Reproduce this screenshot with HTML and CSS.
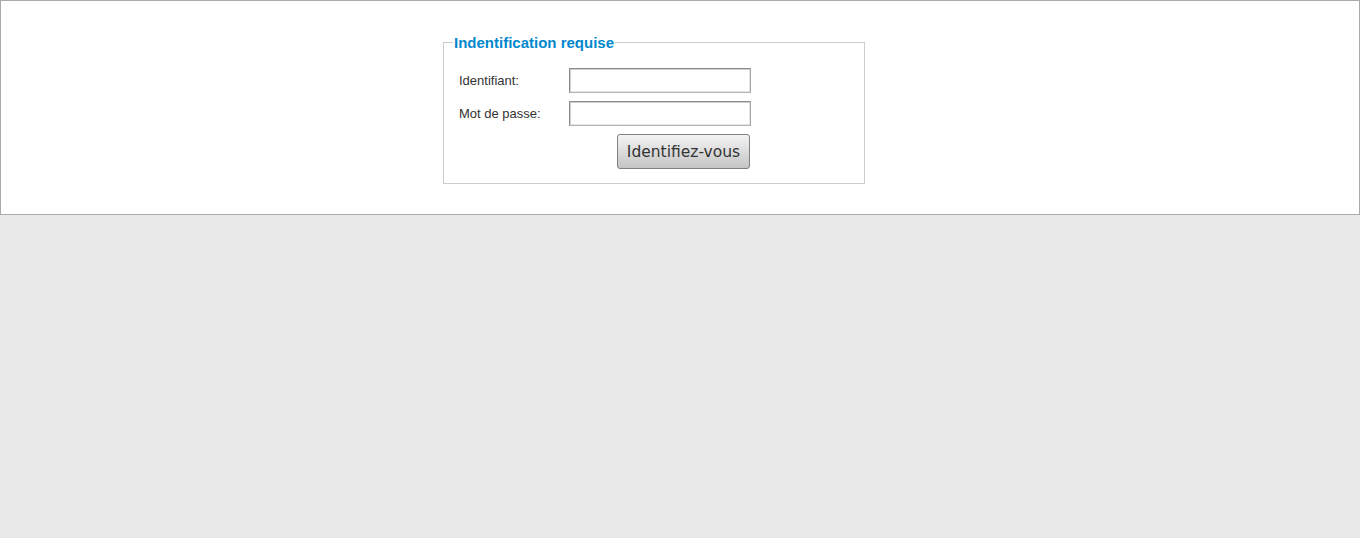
FILE: index.html
```html
<!DOCTYPE html>
<html>
  <head>
    <meta charset="utf-8">
    <title>Identification</title>
    <link rel="stylesheet" href="styles.css">
  </head>
  <body>
    <div class="panel">
      <form class="login">
        <fieldset>
          <legend>Indentification requise</legend>
          <div class="row">
            <label for="login">Identifiant:</label>
            <input id="login" type="text">
          </div>
          <div class="row">
            <label for="pass">Mot de passe:</label>
            <input id="pass" type="password">
          </div>
          <div class="actions">
            <button type="button">Identifiez-vous</button>
          </div>
        </fieldset>
      </form>
    </div>
  </body>
</html>
```

FILE: styles.css
```css
* {
  box-sizing: border-box;
}

html,
body {
  margin: 0;
  height: 100%;
}

body {
  background-color: #e8e8e8;
  font-family: "Liberation Sans", Arial, sans-serif;
  color: #333;
}

.panel {
  background-color: white;
  border: 1px solid #aaa;
  height: 215px;
  padding-top: 33px;
}

.login fieldset {
  width: 422px;
  margin: 0 0 0 442px;
  padding: 17px 0 14px 15px;
  border: 1px solid #ccc;
}

.login legend {
  padding: 0 1px;
  margin-left: -6px;
  color: #0088cc;
  font-weight: bold;
  font-size: 15px;
}

.row {
  display: grid;
  grid-template-columns: 110px 182px;
  align-items: center;
  margin-bottom: 8px;
}

.row label {
  font-size: 13px;
}

.row input {
  height: 25px;
  border: 1px solid #8c8c8c;
  border-bottom-color: #b5b5b5;
  border-right-color: #a5a5a5;
  box-shadow: inset 1px 1px 0 #cfcfcf, inset -1px -1px 0 #e4e4e4;
  padding: 2px 4px;
}

.actions {
  width: 291px;
  text-align: right;
}

.actions button {
  height: 35px;
  width: 133px;
  padding: 0;
  font-family: "DejaVu Sans", sans-serif;
  font-size: 15.5px;
  color: #333;
  border: 1px solid #808080;
  border-radius: 3px;
  background: linear-gradient(#f4f4f4, #c4c4c4);
}
```
